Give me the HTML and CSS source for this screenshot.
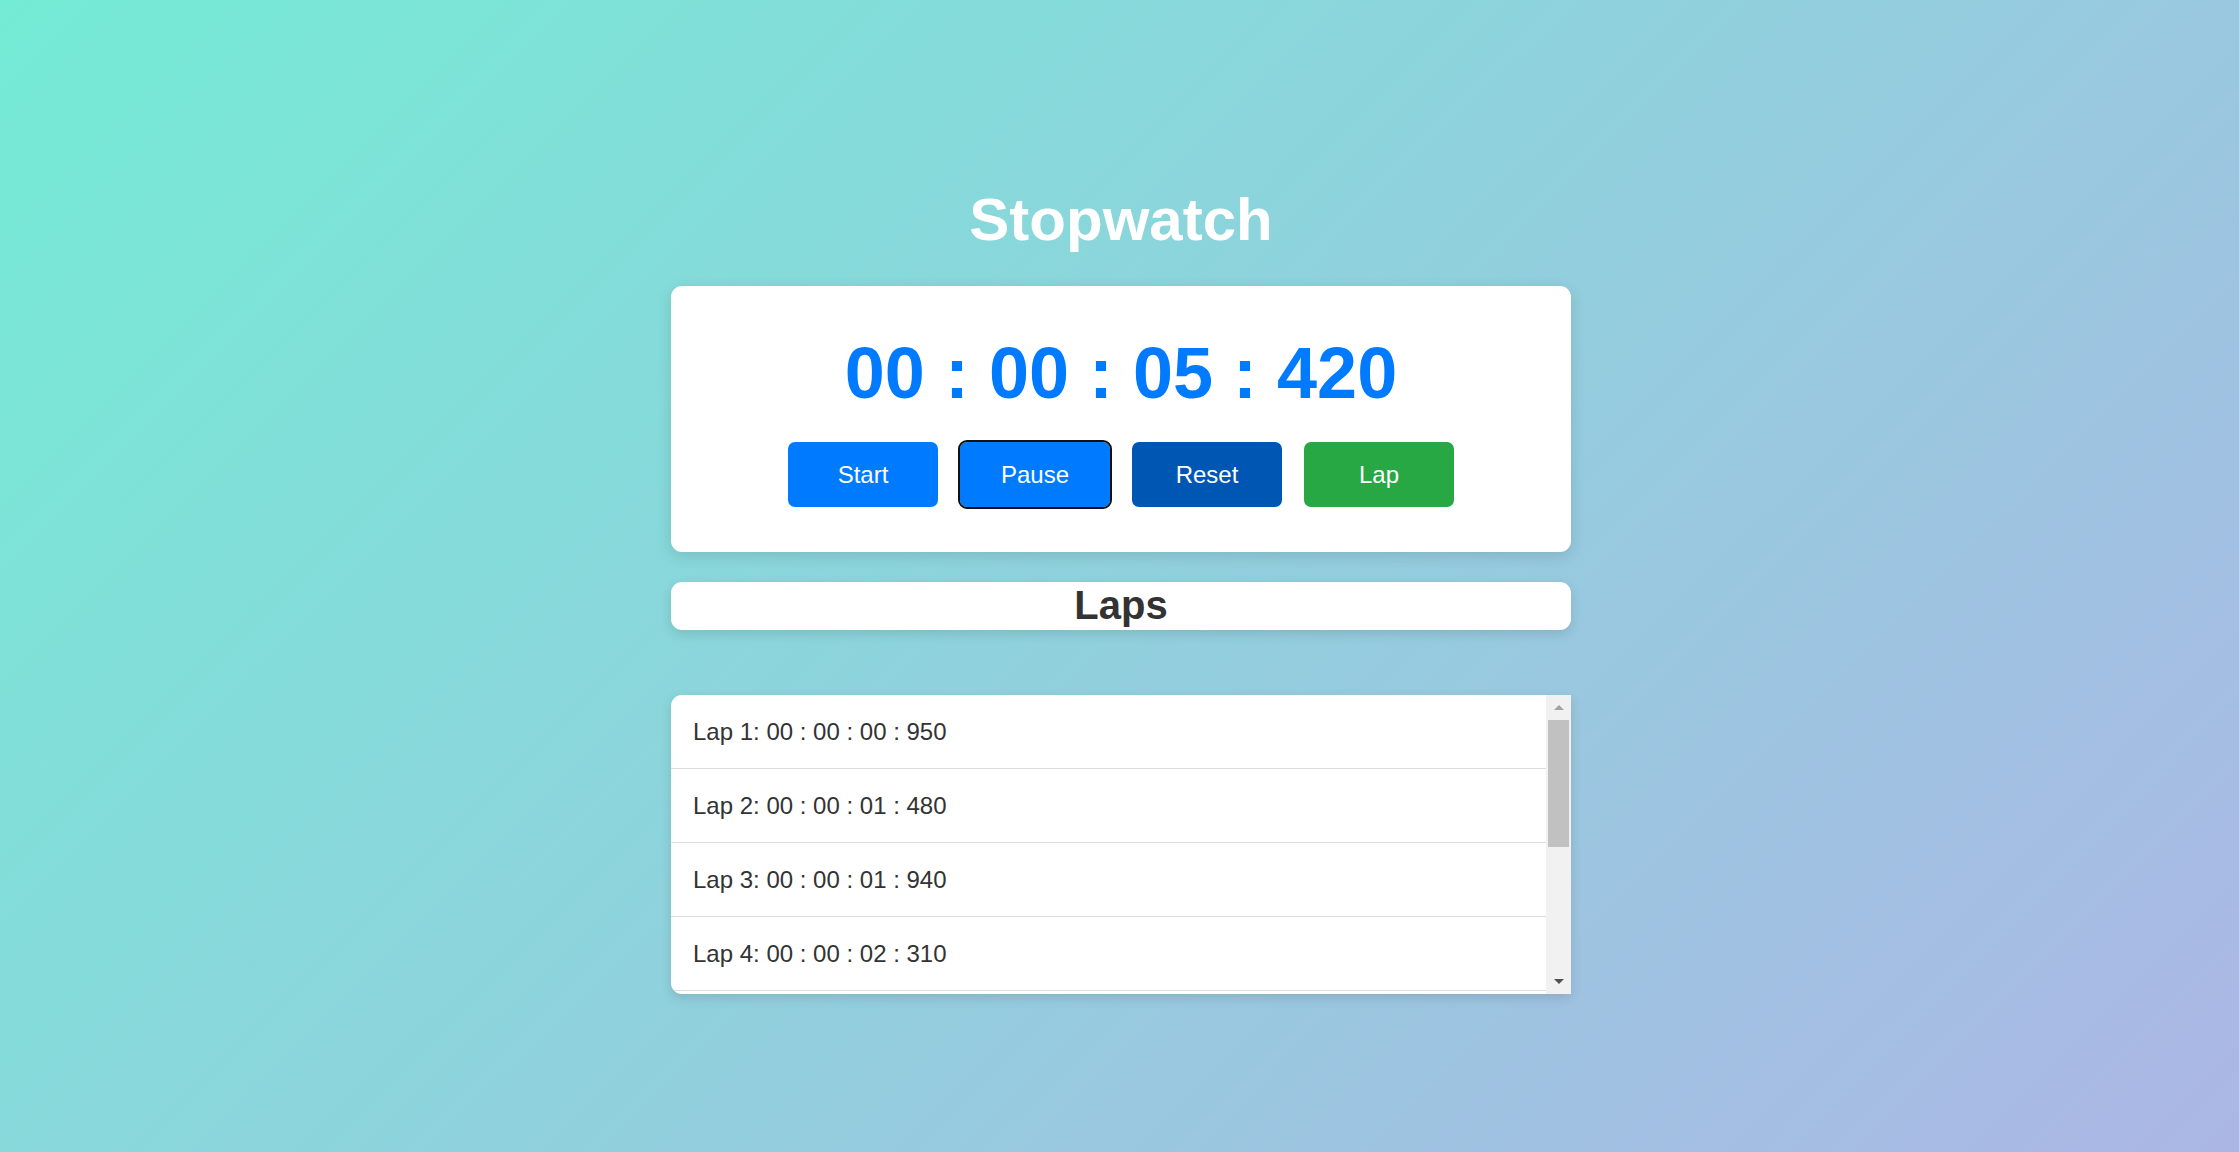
FILE: index.html
```html
<!DOCTYPE html>
<html lang="en">
<head>
<meta charset="utf-8">
<title>Stopwatch</title>
<link rel="stylesheet" href="styles.css">
</head>
<body>
  <main class="app">
    <h1 class="title">Stopwatch</h1>
    <section class="card">
      <div class="timer">00 : 00 : 05 : 420</div>
      <div class="controls">
        <button class="btn btn-start">Start</button>
        <button class="btn btn-pause is-focused">Pause</button>
        <button class="btn btn-reset">Reset</button>
        <button class="btn btn-lap">Lap</button>
      </div>
    </section>
    <h2 class="laps-title">Laps</h2>
    <div class="laps-box">
      <ul class="laps">
        <li class="lap">Lap 1: 00 : 00 : 00 : 950</li>
        <li class="lap">Lap 2: 00 : 00 : 01 : 480</li>
        <li class="lap">Lap 3: 00 : 00 : 01 : 940</li>
        <li class="lap">Lap 4: 00 : 00 : 02 : 310</li>
      </ul>
      <div class="scrollbar" aria-hidden="true">
        <div class="sb-btn">
          <svg width="10" height="5" viewBox="0 0 10 5"><polygon points="5,0 10,5 0,5" fill="#a3a3a3"/></svg>
        </div>
        <div class="sb-track">
          <div class="sb-thumb"></div>
        </div>
        <div class="sb-btn">
          <svg width="10" height="5" viewBox="0 0 10 5"><polygon points="0,0 10,0 5,5" fill="#505050"/></svg>
        </div>
      </div>
    </div>
  </main>
</body>
</html>
```
FILE: styles.css
```css
* {
  box-sizing: border-box;
}

html, body {
  margin: 0;
  height: 100%;
}

body {
  font-family: "Liberation Sans", Arial, sans-serif;
  background: linear-gradient(135deg, #74ebd5 0%, #acb6e5 100%);
  background-attachment: fixed;
  overflow: hidden;
}

.app {
  display: flex;
  flex-direction: column;
  align-items: center;
  padding-top: 185px;
  padding-left: 3px;
}

.title {
  margin: 0 0 31px;
  font-size: 60px;
  line-height: 70px;
  font-weight: 700;
  color: #ffffff;
}

.card {
  width: 900px;
  background: #ffffff;
  border-radius: 11px;
  padding: 45px 0 45px;
  box-shadow: 0 4px 15px rgba(0, 0, 0, 0.12);
  display: flex;
  flex-direction: column;
  align-items: center;
}

.timer {
  font-size: 72px;
  line-height: 84px;
  font-weight: 700;
  color: #007bff;
  margin-bottom: 27px;
}

.controls {
  display: flex;
  gap: 22px;
}

.btn {
  width: 150px;
  height: 65px;
  border: none;
  border-radius: 7px;
  font-family: "Liberation Sans", Arial, sans-serif;
  font-size: 24px;
  color: #ffffff;
  cursor: pointer;
  padding: 0;
}

.btn-start,
.btn-pause {
  background: #007bff;
}

.btn-reset {
  background: #0056b3;
}

.btn-lap {
  background: #28a745;
}

.is-focused {
  outline: 2px solid #101010;
  outline-offset: 0;
}

.laps-title {
  width: 900px;
  margin: 30px 0 0;
  height: 48px;
  line-height: 46px;
  font-size: 40px;
  font-weight: 700;
  color: #333333;
  text-align: center;
  background: #ffffff;
  border-radius: 11px;
  box-shadow: 0 4px 12px rgba(0, 0, 0, 0.12);
}

.laps-box {
  width: 900px;
  height: 299px;
  margin-top: 65px;
  display: flex;
  border-radius: 11px 0 0 11px;
  box-shadow: 0 4px 12px rgba(0, 0, 0, 0.12);
}

.laps {
  flex: 1;
  margin: 0;
  padding: 0;
  list-style: none;
  background: #ffffff;
  border-radius: 11px 0 0 11px;
  overflow: hidden;
}

.lap {
  padding: 23px 22px;
  font-size: 24px;
  line-height: 27px;
  color: #333333;
  border-bottom: 1px solid #dddddd;
}

.scrollbar {
  width: 25px;
  background: #f1f1f1;
  display: flex;
  flex-direction: column;
}

.sb-btn {
  height: 25px;
  display: flex;
  align-items: center;
  justify-content: center;
}

.sb-btn svg {
  display: block;
}

.sb-track {
  flex: 1;
  padding: 0 2px;
}

.sb-thumb {
  height: 127px;
  background: #c1c1c1;
}
```
